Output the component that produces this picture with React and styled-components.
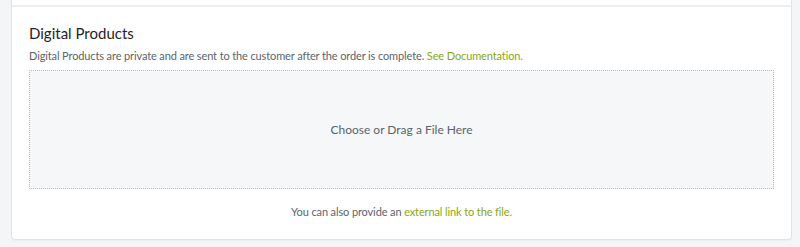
import React from "react";
import styled, { createGlobalStyle } from "styled-components";

const GlobalStyle = createGlobalStyle`
  html, body {
    margin: 0;
    padding: 0;
    background: #f4f5f7;
  }
  body {
    font-family: "Lato", "Liberation Sans", sans-serif;
    -webkit-font-smoothing: antialiased;
  }
`;

const Page = styled.div`
  padding: 0 8px 7px 11px;
`;

const Card = styled.div`
  background: #fff;
  border: 1px solid #e1e3e6;
  border-top: none;
  border-radius: 0 0 4px 4px;
  box-shadow: 0 1px 1px rgba(0, 0, 0, 0.03);
`;

const Divider = styled.div`
  height: 5px;
  border-bottom: 2px solid #eceef0;
`;

const Section = styled.section`
  padding: 17px 17px 20px 17px;
`;

const Heading = styled.h3`
  margin: 0 0 7px;
  font-size: 15px;
  font-weight: 400;
  color: #1f2327;
  line-height: 18px;
`;

const Description = styled.p`
  margin: 0 0 7px;
  font-size: 11px;
  letter-spacing: -0.12px;
  line-height: 14px;
  color: #5c636b;
`;

const Link = styled.a`
  color: #89a712;
  text-decoration: none;
  cursor: pointer;
`;

const DropZone = styled.div`
  height: 117px;
  background: #f6f7f9;
  border: 1px dotted #b8bcc1;
  display: flex;
  align-items: center;
  justify-content: center;
  font-size: 12px;
  color: #5c636b;
  cursor: pointer;
`;

const Footer = styled.p`
  margin: 16px 0 0;
  text-align: center;
  font-size: 11px;
  letter-spacing: -0.12px;
  line-height: 14px;
  color: #5c636b;
`;

export default function App() {
  return (
    <>
      <GlobalStyle />
      <Page>
        <Card>
          <Divider />
          <Section>
            <Heading>Digital Products</Heading>
            <Description>
              Digital Products are private and are sent to the customer after the order is complete.{" "}
              <Link>See Documentation.</Link>
            </Description>
            <DropZone>Choose or Drag a File Here</DropZone>
            <Footer>
              You can also provide an <Link>external link to the file.</Link>
            </Footer>
          </Section>
        </Card>
      </Page>
    </>
  );
}
